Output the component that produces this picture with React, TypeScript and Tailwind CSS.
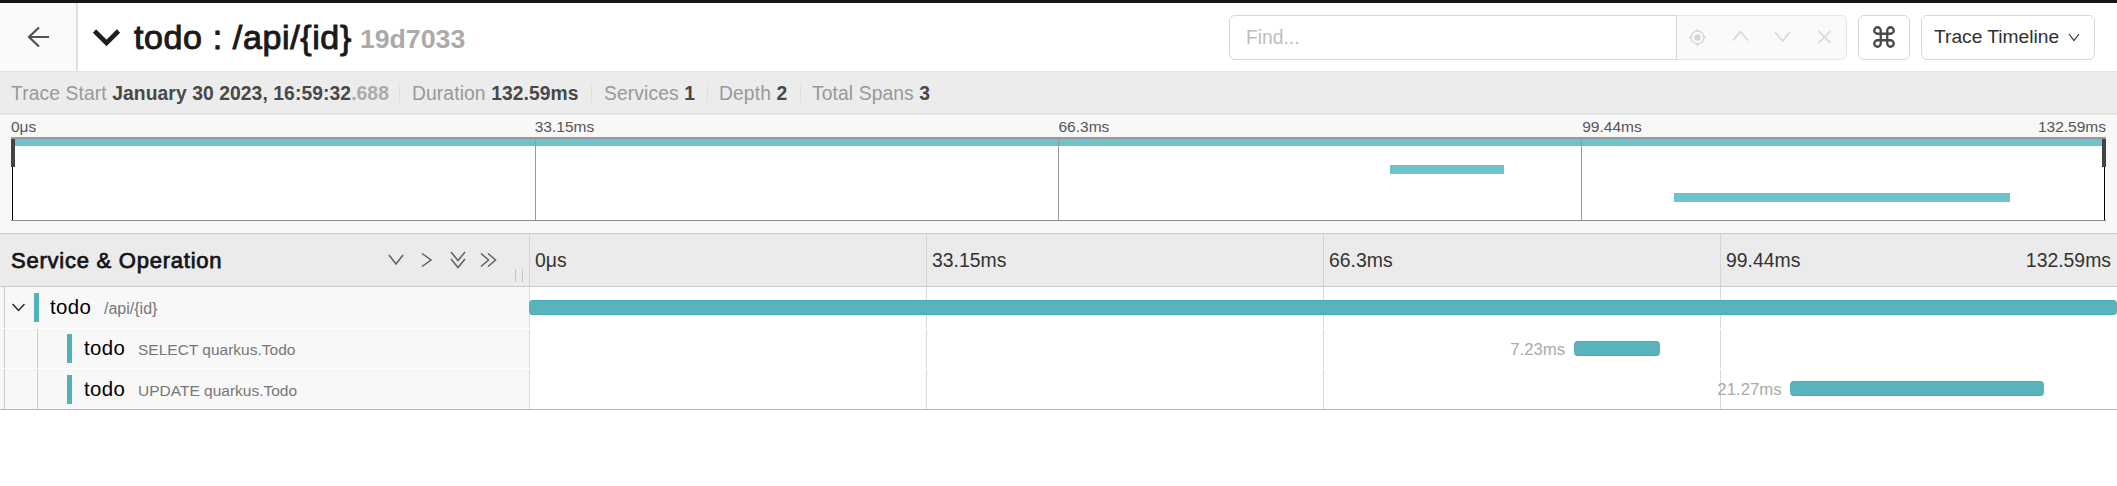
import React from "react";
import { Command } from "lucide-react";

type Span = { service: string; operation: string; left: number; width: number; label?: string; child?: boolean };

const spans: Span[] = [
  { service: "todo", operation: "/api/{id}", left: 0, width: 100 },
  { service: "todo", operation: "SELECT quarkus.Todo", left: 65.79, width: 5.42, label: "7.23ms", child: true },
  { service: "todo", operation: "UPDATE quarkus.Todo", left: 79.42, width: 16.0, label: "21.27ms", child: true },
];

const ticks = ["0μs", "33.15ms", "66.3ms", "99.44ms"];

type IconProps = { d: string; w: number; h: number; stroke?: number; className?: string };

function Line({ d, w, h, stroke = 1.5, className = "" }: IconProps) {
  return (
    <svg width={w} height={h} viewBox={`0 0 ${w} ${h}`} fill="none" stroke="currentColor" strokeWidth={stroke} className={`shrink-0 ${className}`}>
      <path d={d} />
    </svg>
  );
}

function Header() {
  return (
    <header className="flex h-[72px] shrink-0 border-b border-b-[#e4e4e4] border-t-[3px] border-t-[#151515] bg-white">
      <div className="flex w-[78px] items-center border-r-2 border-[#e0e0e0] bg-[#fafafa] pl-[27px] text-[#505050]">
        <Line w={23} h={22} stroke={2.2} d="M22 11H2M12 1.5L2 11L12 20.5" />
      </div>
      <div className="flex w-[1151px] items-center pl-[14px]">
        <Line w={29} h={20} stroke={4.6} className="mt-[1px] text-[#1f1f1f]" d="M2.5 3L14.5 15L26.5 3" />
        <h1 className="ml-[13px] whitespace-pre text-[34px] leading-[40px] tracking-[0.62px] text-[#1a1a1a] [-webkit-text-stroke:1px_#1a1a1a]">todo : /api/&#123;id&#125;</h1>
        <span className="ml-[8px] mt-[3px] text-[26.7px] font-bold leading-[40px] text-[#aaa]">19d7033</span>
      </div>
      <div className="flex items-center">
        <div className="flex h-[45px] w-[448px] items-center rounded-l-[6px] border border-[#d6d6d6] pl-[16px] pt-[3px] text-[19.3px] text-[#bdbdbd]">Find...</div>
        <div className="flex h-[45px] w-[170px] items-center rounded-r-[6px] border border-l-0 border-[#e6e6e6] bg-[#fafafa] text-[#d6d6d6]">
          <svg width="17" height="19" viewBox="0 0 17 19" fill="none" stroke="currentColor" strokeWidth="1.4" className="ml-[12px]">
            <circle cx="8.5" cy="9.5" r="6.5" />
            <circle cx="8.5" cy="9.5" r="3.2" fill="currentColor" stroke="none" />
            <path d="M8.5 1V4M8.5 15V18M0 9.5H3M14 9.5H17" />
          </svg>
          <Line w={17} h={12} className="-mt-[2px] ml-[26px]" d="M1 10.5L8.5 1.5L16 10.5" />
          <Line w={17} h={12} className="ml-[25px]" d="M1 1L8.5 10L16 1" />
          <Line w={15} h={14} className="ml-[26px]" d="M1.5 1L13.5 13M13.5 1L1.5 13" />
        </div>
        <div className="ml-[11px] flex h-[45px] w-[52px] items-center justify-center rounded-[6px] border border-[#d6d6d6] text-[#484848]">
          <Command size={26} strokeWidth={2.1} />
        </div>
        <div className="ml-[11px] flex h-[45px] w-[174px] items-center rounded-[6px] border border-[#d6d6d6] pl-[12px] pt-[1px] text-[19.2px] text-[#303030]">
          <span className="w-[134px] whitespace-nowrap">Trace Timeline</span>
          <Line w={12} h={9} stroke={1.2} d="M1 1L6 7.5L11 1" />
        </div>
      </div>
    </header>
  );
}

function Fact({ label, children, className }: { label: string; children: React.ReactNode; className: string }) {
  return (
    <div className={`flex shrink-0 items-center whitespace-pre ${className}`}>
      <span className="tracking-[0.1px]">{label} </span>
      <b className="tracking-[0.08px] text-[#484848]">{children}</b>
    </div>
  );
}

function Divider({ className }: { className: string }) {
  return <i className={`h-[18px] w-px shrink-0 bg-[#e0e0e0] ${className}`} />;
}

function Overview() {
  return (
    <div className="flex h-[43px] shrink-0 items-center border-b-2 border-[#e4e4e4] bg-[#ececec] pl-[11px] pt-[3px] text-[19.3px] text-[#999]">
      <Fact className="w-[388px]" label="Trace Start">January 30 2023, 16:59:32<span className="text-[#aaa]">.688</span></Fact>
      <Divider className="mr-[12px]" />
      <Fact className="w-[179px]" label="Duration">132.59ms</Fact>
      <Divider className="mr-[12px]" />
      <Fact className="w-[103px]" label="Services">1</Fact>
      <Divider className="mr-[11px]" />
      <Fact className="w-[81px]" label="Depth">2</Fact>
      <Divider className="mr-[11px]" />
      <Fact className="w-[130px]" label="Total Spans">3</Fact>
    </div>
  );
}

function Minimap() {
  return (
    <section className="h-[118px] shrink-0 bg-[#f8f8f8] px-[11px] pt-[2px]">
      <div className="flex h-[20px] items-center text-[15.5px] text-[#555]">
        {ticks.map((t, i) => (
          <div key={t} className="flex flex-1 justify-between">
            <span>{t}</span>
            {i === 3 && <span>132.59ms</span>}
          </div>
        ))}
      </div>
      <div className="relative flex h-[84px] border-b border-t-2 border-b-[#888] border-t-[#999] bg-white">
        <div className="ml-px flex-1 border-l border-black" />
        <div className="z-10 flex-1 border-l border-[#999]" />
        <div className="z-10 flex-1 border-l border-[#999]" />
        <div className="z-10 mr-px flex-1 border-l border-r border-l-[#999] border-r-black" />
        <i className="absolute left-[1px] right-[1px] top-0 h-[7px] bg-[#6cc3c9]" />
        <i className="absolute left-[1379px] top-[26px] h-[9px] w-[114px] bg-[#6cc3c9]" />
        <i className="absolute left-[1663px] top-[54px] h-[9px] w-[336px] bg-[#6cc3c9]" />
        <i className="absolute left-0 top-0 z-20 h-[28px] w-[4px] bg-[#444]" />
        <i className="absolute right-0 top-0 z-20 h-[28px] w-[4px] bg-[#444]" />
      </div>
    </section>
  );
}

function TimelineHeader() {
  return (
    <div className="flex h-[54px] shrink-0 border-y border-[#c8c8c8] bg-[#ebebeb]">
      <div className="relative flex w-[529px] items-center pl-[11px]">
        <h2 className="w-[377px] whitespace-nowrap pt-[2px] text-[22px] leading-[26px] tracking-[0.76px] text-[#151515] [-webkit-text-stroke:0.75px_#151515]">Service &amp; Operation</h2>
        <div className="flex items-center text-[#606060]">
          <Line w={16} h={12} d="M1 1L8 10L15 1" />
          <Line w={11} h={16} className="ml-[17px]" d="M1 1.5L10 8L1 14.5" />
          <Line w={16} h={18} className="ml-[18px]" d="M1 1L8 9.5L15 1M1 8L8 16.5L15 8" />
          <Line w={17} h={16} className="ml-[14px]" d="M1 1.5L8.5 8L1 14.5M8 1.5L15.5 8L8 14.5" />
        </div>
        <i className="absolute bottom-[4px] left-[515px] h-[13px] w-[8px] border-x border-[#c4c4c4]" />
      </div>
      <div className="relative flex flex-1 text-[19.4px] text-[#333]">
        {ticks.map((t) => (
          <div key={t} className="flex flex-1 items-center border-l border-[#d4d4d4] pl-[5px] pt-[2px]">{t}</div>
        ))}
        <div className="absolute right-[6px] top-0 flex h-full items-center pt-[2px]">132.59ms</div>
      </div>
    </div>
  );
}

function Row({ span, first }: { span: Span; first: boolean }) {
  return (
    <div className="flex flex-1">
      <div className={`flex w-[529px] items-center bg-[#f8f8f8] pl-[4px] ${first ? "" : "border-t border-white"}`}>
        <div className={`flex h-full w-[30px] items-center border-l border-[#ccc] pl-[7px] text-[#222] ${span.child ? "mr-[3px]" : ""}`}>
          {!span.child && <Line w={13} h={9} stroke={1.4} className="mt-[1px]" d="M0.5 1L6.5 7.5L12.5 1" />}
        </div>
        {span.child && <div className="h-full w-[30px] border-l border-[#ccc]" />}
        <i className="h-[29px] w-[5px] shrink-0 bg-[#51b2bb]" />
        <div className={`flex items-baseline ${span.child ? "pl-[12px]" : "pl-[11px]"}`}>
          <span className="w-[54px] text-[20.4px] leading-[26px] tracking-[0.4px] text-black">{span.service}</span>
          <span className={`text-[#777] ${first ? "text-[16px]" : "text-[15.5px]"}`}>{span.operation}</span>
        </div>
      </div>
      <div className="relative flex flex-1">
        {ticks.map((t) => (
          <div key={t} className={`flex-1 border-l border-[#d9d9d9] ${first ? "" : "mt-px"}`} />
        ))}
        <div
          className="absolute top-[13px] h-[15px] rounded-[4px] border-y border-[#3fafb8] bg-[#58b3bc]"
          style={{ left: `${span.left}%`, width: `${span.width}%` }}
        >
          {span.label && <span className="absolute right-full top-0 pr-[8.5px] text-[16.8px] leading-[16px] text-[#aaa]">{span.label}</span>}
        </div>
      </div>
    </div>
  );
}

export default function App() {
  return (
    <main className="flex h-[486px] w-[2117px] flex-col overflow-hidden bg-white font-['Liberation_Sans',Arial,sans-serif]">
      <Header />
      <Overview />
      <Minimap />
      <TimelineHeader />
      <div className="flex h-[123px] shrink-0 flex-col border-b border-[#b8b8b8]">
        {spans.map((s, i) => (
          <Row key={s.operation} span={s} first={i === 0} />
        ))}
      </div>
    </main>
  );
}
